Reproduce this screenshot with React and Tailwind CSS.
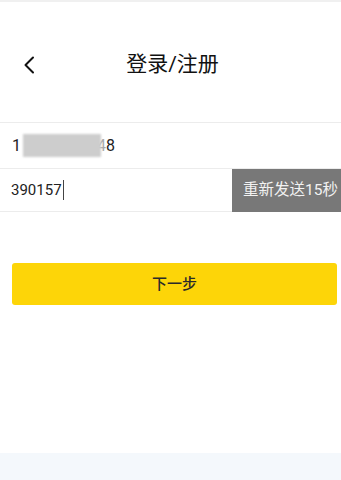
export default function App() {
  const font = { fontFamily: 'Roboto, "Noto Sans CJK SC", sans-serif' };
  return (
    <div className="w-[341px] h-[480px] bg-white flex flex-col overflow-hidden" style={font}>
      <div className="h-[2px] bg-[#f0f0f0]" />
      <div className="relative h-[120px] flex items-center justify-center pt-[4px]">
        <svg className="absolute left-[23px] top-[54px]" width="12" height="18" viewBox="0 0 12 18" fill="none">
          <path d="M10 1.5 L2.5 9 L10 16.5" stroke="#111" strokeWidth="2" strokeLinecap="round" strokeLinejoin="round" />
        </svg>
        <span className="text-[21px] text-[#111] leading-none pl-[4px]">登录/注册</span>
      </div>
      <div className="h-px bg-[#ececec]" />
      <div className="h-[45px] flex items-center pl-[12px] text-[16px] text-[#222]">
        <span>1</span>
        <div className="w-[78px] h-[23px] bg-[#cdcdcd] blur-[1px] ml-[2px] -mr-[4px]" />
        <span className="text-[#aaa]">4</span>
        <span>8</span>
      </div>
      <div className="h-px bg-[#ececec]" />
      <div className="h-[43px] flex">
        <div className="w-[232px] flex flex-col">
          <div className="flex-1 flex items-center pl-[11px] text-[15px] text-[#222]">
            <span>390157</span>
            <span className="w-px h-[20px] bg-[#444] ml-[1px]" />
          </div>
          <div className="h-px bg-[#ececec]" />
        </div>
        <div className="flex-1 bg-[#787878] flex items-center pl-[11px] text-[15.5px] text-[#f2f2f2] whitespace-nowrap">
          重新发送15秒
        </div>
      </div>
      <div className="h-[51px]" />
      <div className="ml-[12px] mr-[4px] h-[42px] rounded-[3px] bg-[#fdd508] flex items-center justify-center text-[15px] font-medium text-[#2a2a2a]">
        下一步
      </div>
      <div className="flex-1" />
      <div className="h-[27px] bg-[#f4f8fc]" />
    </div>
  );
}
